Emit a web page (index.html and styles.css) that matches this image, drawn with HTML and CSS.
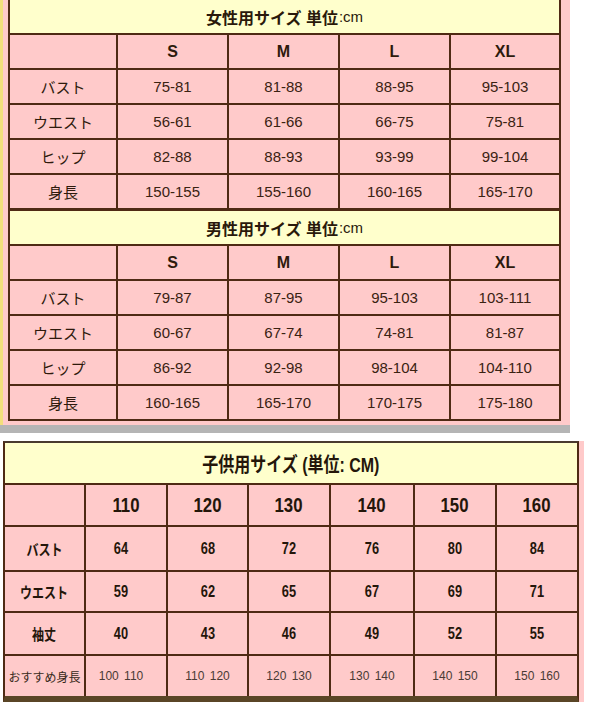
FILE: index.html
```html
<!DOCTYPE html>
<html lang="ja">
<head>
<meta charset="utf-8">
<title>サイズ表</title>
<link rel="stylesheet" href="styles.css">
</head>
<body>
<div class="adult">
  <div class="adult-inner">
    <div class="sz sz-women">
      <div class="title"><b>女性用サイズ 単位</b>:cm</div>
      <div class="c"></div><div class="c hd">S</div><div class="c hd">M</div><div class="c hd">L</div><div class="c hd">XL</div>
      <div class="c lb">バスト</div><div class="c">75-81</div><div class="c">81-88</div><div class="c">88-95</div><div class="c">95-103</div>
      <div class="c lb">ウエスト</div><div class="c">56-61</div><div class="c">61-66</div><div class="c">66-75</div><div class="c">75-81</div>
      <div class="c lb">ヒップ</div><div class="c">82-88</div><div class="c">88-93</div><div class="c">93-99</div><div class="c">99-104</div>
      <div class="c lb">身長</div><div class="c">150-155</div><div class="c">155-160</div><div class="c">160-165</div><div class="c">165-170</div>
    </div>
    <div class="sz sz-men">
      <div class="title"><b>男性用サイズ 単位</b>:cm</div>
      <div class="c"></div><div class="c hd">S</div><div class="c hd">M</div><div class="c hd">L</div><div class="c hd">XL</div>
      <div class="c lb">バスト</div><div class="c">79-87</div><div class="c">87-95</div><div class="c">95-103</div><div class="c">103-111</div>
      <div class="c lb">ウエスト</div><div class="c">60-67</div><div class="c">67-74</div><div class="c">74-81</div><div class="c">81-87</div>
      <div class="c lb">ヒップ</div><div class="c">86-92</div><div class="c">92-98</div><div class="c">98-104</div><div class="c">104-110</div>
      <div class="c lb">身長</div><div class="c">160-165</div><div class="c">165-170</div><div class="c">170-175</div><div class="c">175-180</div>
    </div>
  </div>
  <div class="shadow"></div>
</div>

<div class="kids">
  <div class="kz">
    <div class="k-title"><span class="cx">子供用サイズ (単位: CM)</span></div>
    <div class="k"></div>
    <div class="k k-hd"><span class="cx">110</span></div>
    <div class="k k-hd"><span class="cx">120</span></div>
    <div class="k k-hd"><span class="cx">130</span></div>
    <div class="k k-hd"><span class="cx">140</span></div>
    <div class="k k-hd"><span class="cx">150</span></div>
    <div class="k k-hd"><span class="cx">160</span></div>

    <div class="k k-lb"><span class="cx">バスト</span></div>
    <div class="k k-d k-first"><span class="cx">64</span></div>
    <div class="k k-d"><span class="cx">68</span></div>
    <div class="k k-d"><span class="cx">72</span></div>
    <div class="k k-d"><span class="cx">76</span></div>
    <div class="k k-d"><span class="cx">80</span></div>
    <div class="k k-d"><span class="cx">84</span></div>

    <div class="k k-lb"><span class="cx">ウエスト</span></div>
    <div class="k k-d k-first"><span class="cx">59</span></div>
    <div class="k k-d"><span class="cx">62</span></div>
    <div class="k k-d"><span class="cx">65</span></div>
    <div class="k k-d"><span class="cx">67</span></div>
    <div class="k k-d"><span class="cx">69</span></div>
    <div class="k k-d"><span class="cx">71</span></div>

    <div class="k k-lb"><span class="cx">袖丈</span></div>
    <div class="k k-d k-first"><span class="cx">40</span></div>
    <div class="k k-d"><span class="cx">43</span></div>
    <div class="k k-d"><span class="cx">46</span></div>
    <div class="k k-d"><span class="cx">49</span></div>
    <div class="k k-d"><span class="cx">52</span></div>
    <div class="k k-d"><span class="cx">55</span></div>

    <div class="k k-lb k-lb-thin">おすすめ身長</div>
    <div class="k k-r k-first">100 110</div>
    <div class="k k-r">110 120</div>
    <div class="k k-r">120 130</div>
    <div class="k k-r">130 140</div>
    <div class="k k-r">140 150</div>
    <div class="k k-r">150 160</div>
  </div>
</div>
</body>
</html>
```

FILE: styles.css
```css
html, body {
  margin: 0;
  padding: 0;
  background: #ffffff;
}

body {
  font-family: "Liberation Sans", "Noto Sans CJK JP", sans-serif;
  color: #3a2212;
}

/* ---------- adult tables ---------- */
.adult {
  width: 570px;
}

.adult-inner {
  width: 559px;
  background: #ffcaca;
  border-left: 3px solid #f2df7c;
  padding: 0 3px 4px 5px;
}

.sz {
  display: grid;
  grid-template-columns: 106px 109px 109px 109px 108px;
  grid-auto-rows: 33px;
  gap: 2px;
  background: #4f2a14;
  border: 2px solid #4f2a14;
  width: 549px;
}

.sz-women {
  border-top: 0;
}

.sz-men {
  border-top-width: 1px;
}

.title {
  grid-column: 1 / -1;
  background: #ffffcc;
  display: flex;
  align-items: center;
  justify-content: center;
  font-size: 15px;
  color: #2a190b;
}

.title b {
  font-size: 16px;
  font-weight: 700;
  margin-right: 1px;
}

.c {
  background: #ffcaca;
  display: flex;
  align-items: center;
  justify-content: center;
  font-size: 15px;
  color: #3a2212;
}

.hd {
  font-size: 16px;
  font-weight: 700;
  color: #2e1a0c;
}

.lb {
  font-size: 15px;
  color: #2e1a0c;
}

.shadow {
  width: 570px;
  height: 8px;
  background: #b5b5b5;
}

/* ---------- kids table ---------- */
.kids {
  margin-top: 8px;
  margin-left: 3px;
  width: 576px;
  padding-right: 5px;
  background: #ffcaca;
}

.kz {
  display: grid;
  grid-template-columns: 79px 80px 79px 80px 82px 80px 80px;
  grid-template-rows: 40px 40px 43px 39px 41px 40px;
  gap: 2px;
  background: #4f2a14;
  border: 2px solid #4f2a14;
  border-top-color: #4a3a2e;
  border-bottom: 6px solid #5a4526;
  width: 572px;
}

.k-title {
  grid-column: 1 / -1;
  background: #ffffcc;
  display: flex;
  align-items: center;
  justify-content: center;
  font-size: 20px;
  font-weight: 700;
  color: #24160a;
}

.k {
  background: #ffcaca;
  display: flex;
  align-items: center;
  justify-content: center;
  color: #24160a;
}

.cx {
  display: inline-block;
  transform: scaleX(0.8);
  white-space: nowrap;
}

.k-hd {
  font-size: 21px;
  font-weight: 700;
}

.k-lb {
  font-size: 15px;
  font-weight: 700;
}

.k-lb-thin {
  font-size: 12px;
  font-weight: 400;
  color: #3a2a20;
}

.k-d {
  font-size: 16px;
  font-weight: 700;
}

.k-first {
  padding-right: 10px;
}

.k-r {
  font-size: 12px;
  color: #4a3a34;
  word-spacing: 2px;
}
```
